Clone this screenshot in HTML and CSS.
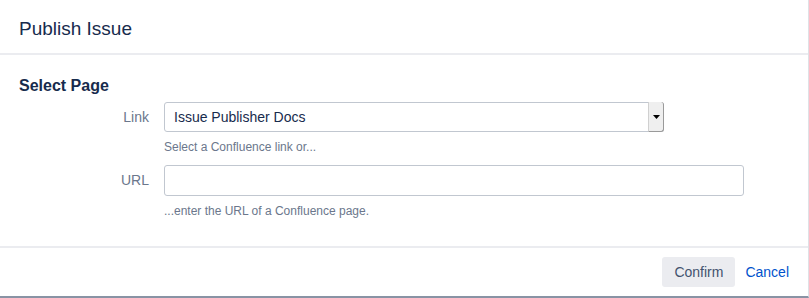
FILE: index.html
```html
<!DOCTYPE html>
<html>
<head>
<meta charset="utf-8">
<link rel="stylesheet" href="styles.css">
</head>
<body>
<div class="dialog">
  <header class="dialog-header">
    <h2 class="dialog-title">Publish Issue</h2>
  </header>
  <div class="dialog-body">
    <h3 class="section-title">Select Page</h3>
    <div class="field-group">
      <label class="field-label">Link</label>
      <div class="field">
        <div class="select">
          <span class="select-value">Issue Publisher Docs</span>
          <span class="select-arrow"><svg width="7" height="4" viewBox="0 0 7 4"><path d="M0 0h7L3.5 4z" fill="#000"/></svg></span>
        </div>
        <div class="field-desc">Select a Confluence link or...</div>
      </div>
    </div>
    <div class="field-group">
      <label class="field-label">URL</label>
      <div class="field">
        <div class="text-input"></div>
        <div class="field-desc">...enter the URL of a Confluence page.</div>
      </div>
    </div>
  </div>
  <footer class="dialog-footer">
    <button class="btn">Confirm</button>
    <a class="link-btn">Cancel</a>
  </footer>
</div>
</body>
</html>
```

FILE: styles.css
```css
html, body {
  margin: 0;
  padding: 0;
  background: #fff;
}
body {
  font-family: "Liberation Sans", Arial, sans-serif;
  font-size: 14px;
  color: #172b4d;
}
.dialog {
  width: 808px;
  height: 296px;
  border-bottom: 2px solid #8993a4;
  border-right: 1px solid #dfe1e6;
  display: flex;
  flex-direction: column;
  background: #fff;
}
.dialog-header {
  height: 55px;
  border-bottom: 2px solid #ebecf0;
  display: flex;
  align-items: center;
  padding: 0 19px;
  box-sizing: border-box;
  flex: none;
}
.dialog-title {
  margin: 0;
  font-size: 19px;
  font-weight: normal;
  color: #172b4d;
  line-height: 24px;
  padding-top: 4px;
}
.dialog-body {
  padding: 21px 19px 0;
  flex: 1;
}
.section-title {
  margin: 0 0 6px;
  font-size: 16px;
  font-weight: bold;
  line-height: 20px;
  color: #172b4d;
}
.field-group {
  display: flex;
  margin-bottom: 10px;
}
.field-label {
  width: 130px;
  text-align: right;
  padding-right: 15px;
  color: #6b778c;
  line-height: 30px;
  flex: none;
}
.field {
  display: flex;
  flex-direction: column;
}
.select {
  width: 500px;
  height: 30px;
  box-sizing: border-box;
  border: 1px solid #c1c7d0;
  border-radius: 3px;
  display: flex;
  align-items: stretch;
  justify-content: space-between;
}
.select-value {
  padding-left: 9px;
  line-height: 28px;
  color: #172b4d;
}
.select-arrow {
  width: 14px;
  background: #efefef;
  border-left: 1px solid #d0d0d0;
  border-right: 1px solid #9a9a9a;
  border-bottom: 1px solid #9a9a9a;
  display: flex;
  align-items: center;
  justify-content: center;
  margin: -1px -1px -1px 0;
  border-radius: 0 3px 3px 0;
}
.text-input {
  width: 580px;
  height: 31px;
  box-sizing: border-box;
  border: 1px solid #c1c7d0;
  border-radius: 3px;
}
.field-desc {
  font-size: 12px;
  color: #6b778c;
  line-height: 16px;
  margin-top: 7px;
}
.dialog-footer {
  height: 50px;
  border-top: 2px solid #ebecf0;
  display: flex;
  align-items: center;
  justify-content: flex-end;
  padding: 0 19px 0 0;
  box-sizing: border-box;
  flex: none;
  gap: 10px;
}
.btn {
  font-family: inherit;
  font-size: 14px;
  border: none;
  background: #ebecf0;
  color: #42526e;
  height: 30px;
  padding: 0 12px;
  border-radius: 3px;
}
.link-btn {
  color: #0052cc;
  font-size: 14px;
  cursor: pointer;
}
```
